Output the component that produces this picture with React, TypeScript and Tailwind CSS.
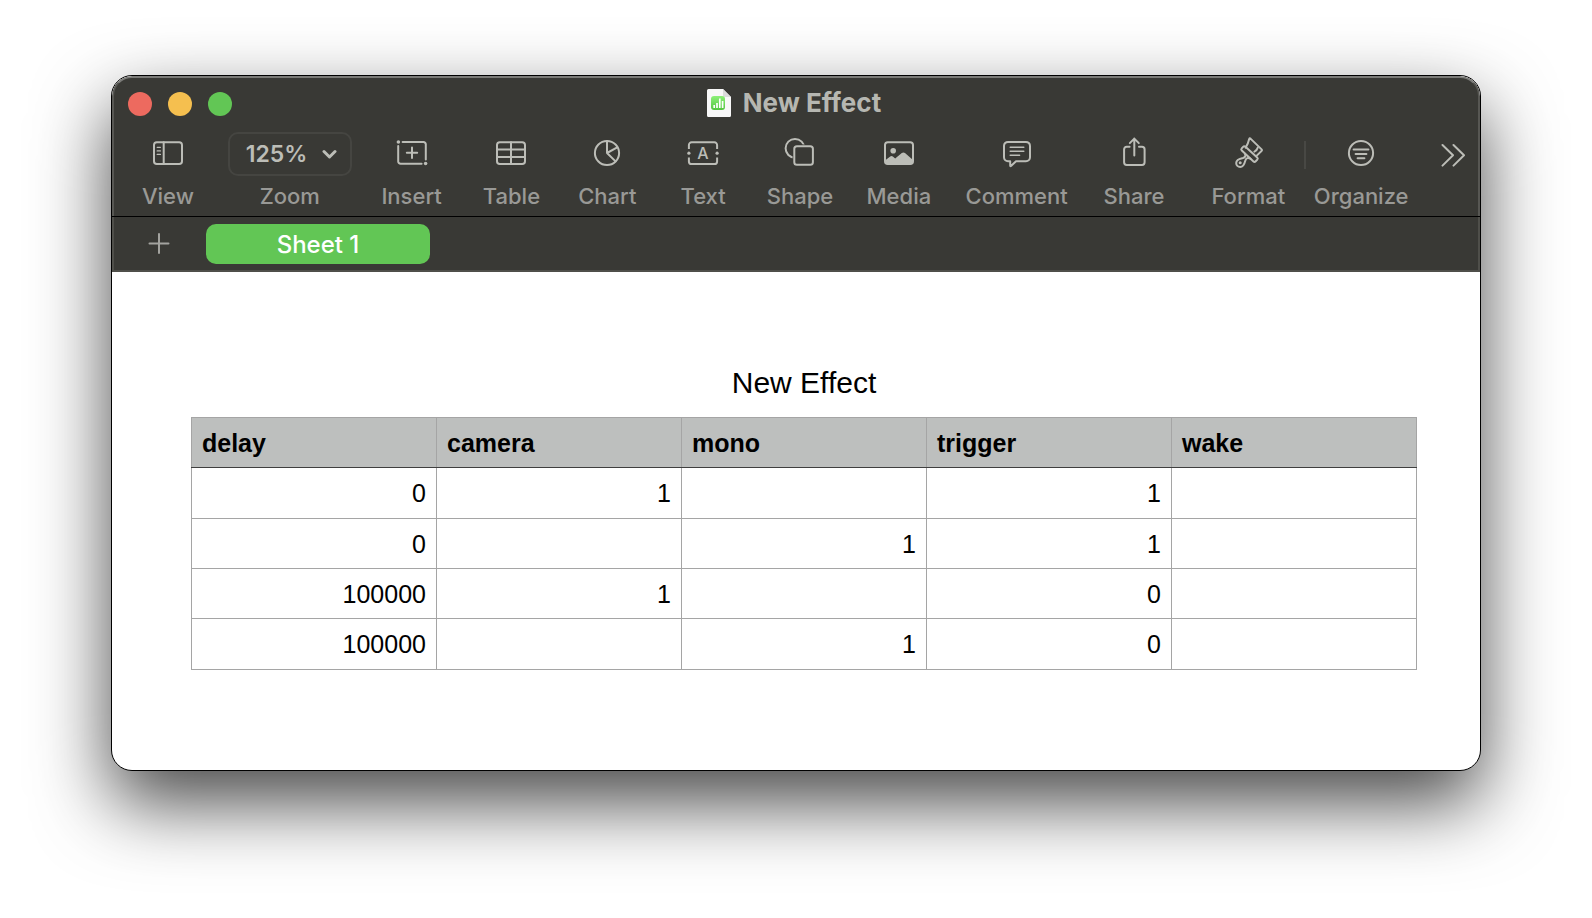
import type { ReactNode } from 'react';

const columns = ['delay', 'camera', 'mono', 'trigger', 'wake'];

const rows = [
  ['0', '1', '', '1', ''],
  ['0', '', '1', '1', ''],
  ['100000', '1', '', '0', ''],
  ['100000', '', '1', '0', ''],
];

function Icon({ children }: { children: ReactNode }) {
  return (
    <svg
      className="h-8 w-9"
      viewBox="0 0 36 32"
      fill="none"
      stroke="currentColor"
      strokeWidth="2"
      strokeLinecap="round"
      strokeLinejoin="round"
      aria-hidden="true"
    >
      {children}
    </svg>
  );
}

const ViewIcon = () => (
  <Icon>
    <rect x="4" y="5.3" width="28" height="21.8" rx="2.8" />
    <path d="M13.7 5.3v21.8" />
    <path d="M7.2 10.3h3.2M7.2 13.9h3.2M7.2 17.4h3.2" strokeWidth="1.3" />
  </Icon>
);

const InsertIcon = () => (
  <Icon>
    <path d="M8.6 5H29.5a2.3 2.3 0 0 1 2.3 2.3V22.6" />
    <path d="M4.2 9v15.4a2.3 2.3 0 0 0 2.3 2.3H27.6" />
    <circle cx="4.4" cy="5" r="1.8" fill="currentColor" stroke="none" />
    <circle cx="31.6" cy="26.5" r="1.8" fill="currentColor" stroke="none" />
    <path d="M18 10.6v10.4M12.8 15.8h10.4" />
  </Icon>
);

const TableIcon = () => (
  <Icon>
    <rect x="4" y="5.3" width="28" height="21.8" rx="2.8" />
    <path d="M18 5.3v21.8M4 12.5h28M4 19.9h28" />
  </Icon>
);

const ChartIcon = () => (
  <Icon>
    <circle cx="18" cy="16" r="12.1" />
    <path d="M18 4v12l9.8-5.4M18 16l8.6 8.4" />
  </Icon>
);

const TextIcon = () => (
  <Icon>
    <path d="M3.9 12V8a2.7 2.7 0 0 1 2.7-2.7h22.8A2.7 2.7 0 0 1 32.1 8v4" strokeLinecap="butt" />
    <path d="M3.9 20.4v4a2.7 2.7 0 0 0 2.7 2.7h22.8a2.7 2.7 0 0 0 2.7-2.7v-4" strokeLinecap="butt" />
    <circle cx="3.9" cy="16.2" r="1.6" fill="currentColor" stroke="none" />
    <circle cx="32.1" cy="16.2" r="1.6" fill="currentColor" stroke="none" />
    <text
      x="18"
      y="22.2"
      textAnchor="middle"
      className="font-['Inter',sans-serif] text-[16px] font-medium"
      fill="currentColor"
      stroke="none"
    >
      A
    </text>
  </Icon>
);

const ShapeIcon = () => (
  <Icon>
    <circle cx="13" cy="11.3" r="9.4" />
    <rect x="12.3" y="9.2" width="18.6" height="18.6" rx="2.6" fill="#393935" stroke="#393935" strokeWidth="3.4" />
    <rect x="12.3" y="9.2" width="18.6" height="18.6" rx="2.6" />
  </Icon>
);

const MediaIcon = () => (
  <Icon>
    <rect x="4" y="5.3" width="28" height="21.8" rx="2.8" />
    <circle cx="12.2" cy="13.7" r="2.8" fill="currentColor" stroke="none" />
    <path
      d="M4 23.4l5.2-4q1.3-1 2.6 0l2.4 2.1 6.6-5.4q1.6-1.3 3.2 0l8 6.9v1.3a2.8 2.8 0 0 1-2.8 2.8H6.8a2.8 2.8 0 0 1-2.8-2.8z"
      fill="currentColor"
      stroke="none"
    />
  </Icon>
);

const CommentIcon = () => (
  <Icon>
    <path d="M9 4.9H27a4 4 0 0 1 4 4V20.2a4 4 0 0 1-4 4H17L12 28.9q-.8.6-.8-.4V24.2H9a4 4 0 0 1-4-4V8.9a4 4 0 0 1 4-4z" />
    <path d="M11.2 10.2h13.6M11.2 14.2h13.6M11.2 18.2h9.4" strokeWidth="1.5" />
  </Icon>
);

const ShareIcon = () => (
  <Icon>
    <path d="M13.6 9.8H10.7a2.6 2.6 0 0 0-2.6 2.6V25.3a2.6 2.6 0 0 0 2.6 2.6H26a2.6 2.6 0 0 0 2.6-2.6V12.4A2.6 2.6 0 0 0 26 9.8H23" />
    <path d="M18.3 18.6V1.6M13.8 6.1l4.5-4.5 4.5 4.5" />
  </Icon>
);

const FormatIcon = () => (
  <Icon>
    <path d="M15.6 10.6C17.8 7.6 18.6 4.6 19.2 2q.4-1.2 1.3-.4L31.6 12.4q.8.9-.1 1.6L27 18.4" />
    <path d="M15.2 9.6L27.2 20.4q1.1 1.1.1 2.2l-1.6 1.7q-1.1 1.1-2.2.1L11.8 13.6q-1.1-1.1-.1-2.2l1.4-1.6q1-1.1 2.1-.2z" />
    <path d="M24.4 14.6q2.6-1 3.4-4" />
    <path d="M15 16.8q1.4 3.2-2 4.2c-3.8.8-6.8 2-6.8 4.9 0 2.4 1.8 4 4 4 3.2 0 4.3-3.2 5-6 .8-3 3-3.6 5.2-2.2" />
    <circle cx="10.2" cy="25.7" r="1.5" fill="currentColor" stroke="none" />
  </Icon>
);

const OrganizeIcon = () => (
  <Icon>
    <circle cx="18" cy="16" r="12.1" />
    <path d="M10.6 12.5h14.8M12.6 16.9h10.8M14.6 21.2h6.8" />
  </Icon>
);

function NumbersDocIcon() {
  return (
    <svg className="h-7 w-6" viewBox="0 0 24 28" aria-hidden="true">
      <defs>
        <linearGradient id="badge" x1="0" y1="0" x2="0" y2="1">
          <stop offset="0" stopColor="#8df079" />
          <stop offset="1" stopColor="#54c540" />
        </linearGradient>
      </defs>
      <path d="M1.5 0H16l8 8v18.5a1.5 1.5 0 0 1-1.5 1.5h-21A1.5 1.5 0 0 1 0 26.5v-25A1.5 1.5 0 0 1 1.5 0z" fill="#f8f8f8" />
      <path d="M16 0l8 8h-6.5A1.5 1.5 0 0 1 16 6.5z" fill="#dcdcdc" />
      <rect x="4" y="7" width="14" height="14" rx="3" fill="url(#badge)" />
      <path d="M7.2 19v-3M10 19v-5M12.800 19V9.500M15.600 19v-7" stroke="#fff" strokeWidth="1.7" />
    </svg>
  );
}

function ToolbarButton({ label, icon }: { label: string; icon: ReactNode }) {
  return (
    <button type="button" className="flex flex-col items-center gap-[13px] text-[#bcbdb7]">
      {icon}
      <span className="text-[22px] leading-7 font-medium text-[#999996]">{label}</span>
    </button>
  );
}

function TitleBar() {
  return (
    <div className="grid grid-cols-3 items-start px-3.5 pt-[9px]">
      <div className="flex gap-4 pt-[5px]">
        <button type="button" aria-label="Close" className="size-6 rounded-full bg-[#ed6a5f]" />
        <button type="button" aria-label="Minimize" className="size-6 rounded-full bg-[#f5bf4f]" />
        <button type="button" aria-label="Full screen" className="size-6 rounded-full bg-[#62c655]" />
      </div>
      <div className="flex items-center justify-center gap-3 pr-1">
        <NumbersDocIcon />
        <h1 className="text-[26px] leading-8 font-bold whitespace-nowrap text-[#b6b7b1]">New Effect</h1>
      </div>
    </div>
  );
}

function ZoomControl() {
  return (
    <div className="flex flex-col items-center gap-1.5">
      <div className="relative -mt-[5px] w-[124px]">
        <select
          id="zoom"
          defaultValue="125"
          className="h-11 w-full appearance-none rounded-[10px] border-2 border-[#454541] bg-transparent pl-4 text-[23px] font-semibold text-[#bcbdb7]"
        >
          <option value="100">100%</option>
          <option value="125">125%</option>
          <option value="150">150%</option>
        </select>
        <svg
          className="pointer-events-none absolute top-4 right-3.5 h-3 w-4"
          viewBox="0 0 16 12"
          fill="none"
          stroke="#bcbdb7"
          strokeWidth="3"
          strokeLinecap="round"
          strokeLinejoin="round"
          aria-hidden="true"
        >
          <path d="M2 3.5L7.500 9l5.500-5.500" />
        </svg>
      </div>
      <label htmlFor="zoom" className="text-[22px] leading-7 font-medium text-[#999996]">
        Zoom
      </label>
    </div>
  );
}

function Toolbar() {
  return (
    <div className="grid grid-cols-[86fr_158fr_86fr_114fr_78fr_114fr_80fr_118fr_118fr_117fr_112fr_2px_110fr_62fr] items-start pt-[18px] pl-[11px]">
      <ToolbarButton label="View" icon={<ViewIcon />} />
      <ZoomControl />
      <ToolbarButton label="Insert" icon={<InsertIcon />} />
      <ToolbarButton label="Table" icon={<TableIcon />} />
      <ToolbarButton label="Chart" icon={<ChartIcon />} />
      <ToolbarButton label="Text" icon={<TextIcon />} />
      <ToolbarButton label="Shape" icon={<ShapeIcon />} />
      <ToolbarButton label="Media" icon={<MediaIcon />} />
      <ToolbarButton label="Comment" icon={<CommentIcon />} />
      <ToolbarButton label="Share" icon={<ShareIcon />} />
      <ToolbarButton label="Format" icon={<FormatIcon />} />
      <div className="mt-1 h-7 w-0.5 bg-[#484844]" />
      <ToolbarButton label="Organize" icon={<OrganizeIcon />} />
      <button type="button" aria-label="More toolbar items" className="flex justify-center pt-1 pl-3 text-[#bcbdb7]">
        <svg
          className="h-7 w-6"
          viewBox="0 0 24 28"
          fill="none"
          stroke="currentColor"
          strokeWidth="2"
          strokeLinecap="round"
          strokeLinejoin="round"
          aria-hidden="true"
        >
          <path d="M1.5 4l10.500 10.300L1.5 24.600M12.500 4L23 14.300 12.500 24.600" />
        </svg>
      </button>
    </div>
  );
}

function SheetBar() {
  return (
    <div className="flex h-[55px] items-center gap-9 border-x-2 border-b-2 border-[#4f4f4a] bg-[#393935] pl-[34px]">
      <button type="button" aria-label="Add sheet" className="text-[#a3a39f]">
        <svg className="size-[22px]" viewBox="0 0 22 22" stroke="currentColor" strokeWidth="2" strokeLinecap="round" aria-hidden="true">
          <path d="M11 1v19M1.500 10.500h19" />
        </svg>
      </button>
      <button type="button" className="h-10 w-56 rounded-[10px] bg-[#62c655] pt-0.5 text-[24px] font-medium text-white">
        Sheet 1
      </button>
    </div>
  );
}

function DataTable() {
  return (
    <table className="w-full table-fixed border-collapse font-['Liberation_Sans',Arial,sans-serif] text-[25px] leading-7 text-black">
      <caption className="pb-[9px] text-[30px] leading-[50px]">New Effect</caption>
      <thead>
        <tr className="h-[50px] bg-[#bdbfbe]">
          {columns.map((name) => (
            <th key={name} scope="col" className="border border-[#a5a5a5] border-b-[#3f3f3f] px-2.5 py-0 text-left font-bold">
              {name}
            </th>
          ))}
        </tr>
      </thead>
      <tbody>
        {rows.map((row, i) => (
          <tr key={i} className="h-[50px] first:h-[51px] last:h-[51px]">
            {row.map((value, j) => (
              <td key={j} className="border border-[#a5a5a5] px-2.5 py-0 text-right">
                {value}
              </td>
            ))}
          </tr>
        ))}
      </tbody>
    </table>
  );
}

export default function App() {
  return (
    <div className="min-h-screen overflow-hidden bg-white px-[111px] pt-[75px] pb-[147px] font-['Inter',sans-serif]">
      <main className="overflow-hidden rounded-[21px] border border-black bg-white shadow-[0_32px_76px_rgba(0,0,0,0.72)]">
        <header className="h-[140px] rounded-t-[20px] border-x-2 border-t-2 border-x-[#575753] border-t-[#7b7b78] bg-[#393935]">
          <TitleBar />
          <Toolbar />
        </header>
        <div className="h-px bg-black" />
        <SheetBar />
        <section className="pt-[86px] pr-[63px] pb-[100px] pl-[79px]">
          <DataTable />
        </section>
      </main>
    </div>
  );
}
